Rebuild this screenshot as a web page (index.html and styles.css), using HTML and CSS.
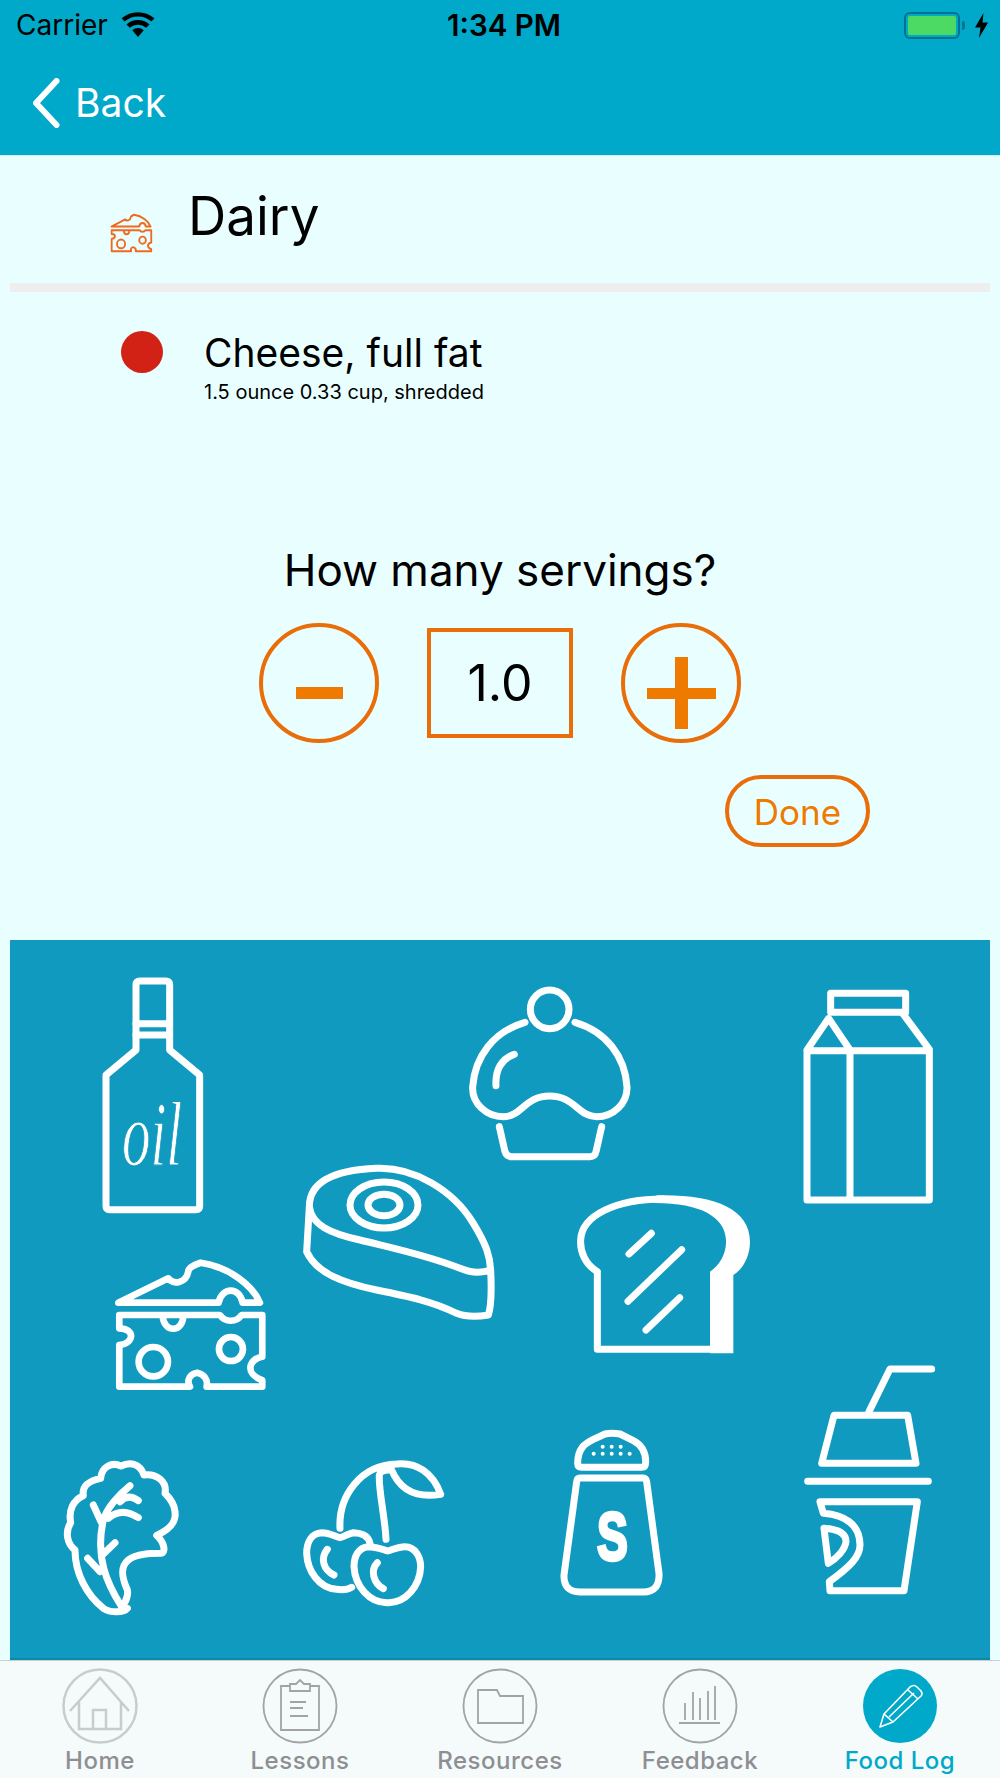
FILE: index.html
```html
<!DOCTYPE html>
<html lang="en">
<head>
<meta charset="utf-8">
<title>Dairy</title>
<link rel="stylesheet" href="styles.css">
</head>
<body>
<svg class="defs" width="0" height="0" aria-hidden="true">
  <symbol id="cheese" viewBox="160 920 466 408" preserveAspectRatio="none">
    <g class="line">
      <path d="M175 1058L325 985C340 1005 378 1000 385 965C385 955 400 945 422 938C510 950 580 1010 600 1058H548C540 1010 485 1010 476 1058Z"/>
      <path d="M178 1095H480C495 1118 530 1118 545 1095H607V1220C570 1225 550 1270 607 1290V1310H440C445 1290 432 1272 412 1268C392 1270 378 1290 390 1310H178V1185C225 1180 225 1135 178 1135ZM308 1095C310 1150 370 1150 370 1095"/>
      <circle cx="280" cy="1235" r="44"/>
      <circle cx="513" cy="1197" r="36"/>
    </g>
  </symbol>
</svg>
<div class="app">
  <header class="top">
    <div class="status">
      <div class="carrier">
        <span>Carrier</span>
        <svg class="wifi" viewBox="0 0 34 26">
          <path d="M17 26L11 19A9 9 0 0 1 23 19Z"/>
          <path d="M8.500 16.500A13 13 0 0 1 25.500 16.500L29 13A18 18 0 0 0 5 13Z"/>
          <path d="M3 10A21 21 0 0 1 31 10L34 6.500A26 26 0 0 0 0 6.500Z"/>
        </svg>
      </div>
      <span class="clock">1:34 PM</span>
      <div class="power">
        <span class="battery"><span class="charge"></span></span>
        <span class="nub"></span>
        <svg class="bolt" viewBox="0 0 13 25"><path d="M8.500 0L0 14.500H5.500L4 25L13 9.500H7.500Z"/></svg>
      </div>
    </div>
    <div class="nav">
      <svg class="chevron" viewBox="0 0 28 50"><path d="M24.500 3L4 25L24.500 47"/></svg>
      <span class="back">Back</span>
    </div>
  </header>

  <section class="category">
    <svg class="cat-icon"><use href="#cheese"/></svg>
    <h1 class="cat-title">Dairy</h1>
  </section>
  <div class="rule"></div>

  <section class="food">
    <span class="dot"></span>
    <div class="food-text">
      <div class="food-name">Cheese, full fat</div>
      <div class="food-size">1.5 ounce 0.33 cup, shredded</div>
    </div>
  </section>

  <h2 class="prompt">How many servings?</h2>
  <div class="stepper">
    <div class="round"><span class="minus"></span></div>
    <div class="qty">1.0</div>
    <div class="round"><span class="plus"></span></div>
  </div>
  <div class="done-row"><div class="done">Done</div></div>

  <section class="panel">
    <svg class="foods" viewBox="10 940 980 718">
      <!-- bottle, meat -->
      <g class="line" transform="translate(60 950) scale(.33333)">
        <path d="M228 300V105Q228 93 240 93H317Q329 93 329 105V300L419 375V768Q419 779 408 779H149Q138 779 138 768V375Z"/>
        <path d="M228 221H329M228 255H329"/>
        <path d="M748 770C748 690 830 660 950 655C1060 650 1180 720 1240 820C1280 885 1290 920 1292 960C1270 968 1235 970 1200 955C1100 915 1000 895 900 870C810 850 755 825 748 770L740 905C770 970 850 1000 950 1020C1050 1040 1120 1055 1190 1090C1220 1102 1255 1100 1285 1095C1297 1060 1294 1000 1292 960"/>
        <ellipse cx="972" cy="765" rx="102" ry="69"/>
        <ellipse cx="972" cy="765" rx="48" ry="32"/>
      </g>
      <text class="oil" transform="translate(122 1165) scale(.62 1)">oil</text>
      <!-- cheese -->
      <use href="#cheese" x="113.300" y="1256.700" width="155.300" height="136"/>
      <!-- cupcake, bread, milk -->
      <g class="line" transform="translate(450 960) scale(.33333)">
        <circle cx="299" cy="148" r="58"/>
        <path d="M225 187C130 215 75 290 68 380C65 430 110 470 160 470C215 470 225 408 299 408C373 408 385 470 440 470C490 470 533 430 531 380C525 290 470 215 375 187"/>
        <path d="M193 283C155 295 135 330 138 377"/>
        <path d="M148 500L165 575Q170 590 185 590H420Q435 590 438 575L455 500"/>
        <rect x="1142" y="100" width="225" height="57"/>
        <path d="M1071 272H1438V720H1071ZM1200 272V720M1071 270L1136 175L1200 270M1358 160L1438 268"/>
        <path d="M442 935C405 912 390 875 392 840C395 765 500 717 640 717M442 935V1168H790"/>
        <path class="solid" d="M620 706C790 702 900 745 900 845C900 885 882 925 850 945V1180H780V935C810 915 830 880 828 840C825 770 750 728 610 729Z"/>
        <path d="M537 882L604 820M534 1024L695 869M588 1110L689 1013"/>
      </g>
      <!-- lettuce, cherries -->
      <g class="line" transform="translate(40 1350) scale(.33333)">
        <path d="M245 770C265 750 265 720 260 715C245 680 240 650 265 630C290 610 335 610 362 610C378 608 375 580 350 556C385 540 410 520 405 485C403 460 385 440 375 430C382 395 350 370 312 375C300 340 270 335 243 348C215 335 185 350 182 385C150 392 125 405 130 437C100 450 85 480 92 518C75 545 80 580 105 600C105 670 140 735 190 775C210 788 250 790 262 775"/>
        <path d="M245 770C200 700 165 620 190 510C200 475 235 435 270 407M160 465L183 515M240 455Q265 430 295 452M205 505Q245 470 295 503M190 612L225 578M143 625L180 665"/>
        <path d="M990 580C985 555 960 548 940 548C925 550 915 560 900 563C885 560 870 548 845 548C815 550 800 575 800 610C802 660 835 715 890 718C905 720 925 718 935 712"/>
        <path d="M1043 603C1025 598 1010 590 985 590C955 592 942 620 942 650C945 710 990 760 1043 758C1095 760 1140 710 1142 650C1142 620 1125 590 1095 590C1075 590 1060 598 1043 603Z"/>
        <path d="M862 598C840 625 850 660 882 675M1012 638C990 660 1000 700 1030 716"/>
        <path d="M900 535C895 440 960 345 1070 342C1130 335 1180 370 1202 433C1130 445 1080 420 1055 360M1038 568C1035 500 1015 420 1018 375Q1020 362 1045 360"/>
      </g>
      <!-- salt, yogurt -->
      <g class="line" transform="translate(530 1350) scale(.33333)">
        <path d="M155 352Q143 352 143 340C143 295 165 280 190 268L225 252Q245 248 270 252L310 272C335 285 347 305 347 335Q347 352 335 352Z"/>
        <path d="M150 384H340Q348 384 350 395L387 670Q390 725 340 726H150Q100 725 102 675L140 395Q141 384 150 384Z"/>
        <path d="M912 196H1133L1158 340H875ZM1017 185L1080 57H1205M833 394H1195"/>
        <path d="M870 455H1162L1122 722H900L898 695C960 650 990 620 990 585C990 520 940 495 880 490Z"/>
        <path d="M882 535C930 538 948 555 948 575C945 600 920 625 895 640Z"/>
      </g>
      <g class="dots" transform="translate(530 1350) scale(.33333)">
        <circle cx="218" cy="290" r="6"/><circle cx="245" cy="290" r="6"/><circle cx="272" cy="290" r="6"/>
        <circle cx="191" cy="311" r="6"/><circle cx="218" cy="311" r="6"/><circle cx="245" cy="311" r="6"/><circle cx="272" cy="311" r="6"/><circle cx="299" cy="311" r="6"/>
      </g>
      <text class="salt" transform="translate(597 1560) scale(.68 1)">S</text>
    </svg>
  </section>

  <nav class="tabs">
    <div class="tab">
      <svg class="tab-icon faint" viewBox="-38 -38 76 76">
        <circle r="36.500"/>
        <path d="M-30 5L0 -28L29 5M-21 -4V23H21V-4M-7 23V4H6V23"/>
      </svg>
      <span>Home</span>
    </div>
    <div class="tab">
      <svg class="tab-icon" viewBox="-38 -38 76 76">
        <circle r="36.500"/>
        <path d="M-10 -20H-19V24H19V-20H10M-10 -15H10V-22H4L0 -26L-4 -22H-10ZM-10 -4H6M-10 2H3M-10 10H8"/>
      </svg>
      <span>Lessons</span>
    </div>
    <div class="tab">
      <svg class="tab-icon" viewBox="-38 -38 76 76">
        <circle r="36.500"/>
        <path d="M-22 17V-16H-3L0 -10H23V17Z"/>
      </svg>
      <span>Resources</span>
    </div>
    <div class="tab">
      <svg class="tab-icon" viewBox="-38 -38 76 76">
        <circle r="36.500"/>
        <path d="M-15 14V-3M-7 14V-14M0 14V-8M8 14V-15M15 14V-20M-21 17H20"/>
      </svg>
      <span>Feedback</span>
    </div>
    <div class="tab active">
      <svg class="tab-icon" viewBox="-38 -38 76 76">
        <circle r="37"/>
        <path d="M-20 21L-16 8L10 -19Q14 -22 17 -19L21 -15Q23 -12 21 -10L-7 16ZM-16 8L-7 16M-11 11L14 -13M8 -16L18 -7"/>
      </svg>
      <span>Food Log</span>
    </div>
  </nav>
</div>
</body>
</html>
```
FILE: styles.css
```css
* { box-sizing: border-box; }
html, body { margin: 0; padding: 0; }
body { font-family: Inter, "Liberation Sans", sans-serif; color: #000; }
.defs { position: absolute; }

.app { width: 1000px; height: 1778px; display: flex; flex-direction: column; background: #e9ffff; overflow: hidden; }

.top { height: 156px; background: #00a9c9; border-bottom: 1px solid #cfeef2; }
.status { height: 50px; padding: 0 12px 0 16px; display: flex; justify-content: space-between; align-items: center; position: relative; font-size: 28px; }
.carrier { display: flex; align-items: center; gap: 13px; }
.wifi { width: 34px; height: 25px; margin-top: -2px; fill: #000; }
.clock { position: absolute; left: 447px; font-weight: 600; font-size: 29.500px; }
.power { display: flex; align-items: center; }
.battery { width: 56px; height: 27px; padding: 2px; border: 2px solid #00738c; border-radius: 6px; display: block; }
.charge { display: block; width: 100%; height: 100%; background: #4cd964; border-radius: 2px; }
.nub { width: 3px; height: 9px; margin-left: 2px; background: #00738c; border-radius: 0 3px 3px 0; }
.bolt { width: 13px; height: 25px; margin-left: 10px; fill: #000; }

.nav { height: 105px; padding: 0 0 0 32px; display: flex; align-items: center; gap: 15px; color: #fff; }
.chevron { width: 28px; height: 50px; fill: none; stroke: #fff; stroke-width: 6; stroke-linecap: round; stroke-linejoin: round; }
.back { font-size: 39px; }

.category { height: 127px; padding: 0 0 0 110px; display: flex; align-items: flex-start; }
.cat-icon { width: 43px; height: 40px; margin-top: 57px; color: #f0691f; flex: none; }
.cat-title { margin: 27px 0 0 35px; font-size: 53px; font-weight: 400; line-height: 66px; }

.rule { height: 9px; margin: 0 10px; background: #eeeeee; }

.food { display: flex; padding: 39px 0 0 121px; height: 250px; gap: 41px; }
.dot { width: 42px; height: 42px; border-radius: 50%; background: #d22215; flex: none; }
.food-name { font-size: 39px; line-height: 46px; margin-top: -1px; }
.food-size { font-size: 20px; line-height: 24px; margin-top: 4px; }

.prompt { margin: 0; text-align: center; font-size: 44px; font-weight: 400; line-height: 56px; height: 81px; }
.stepper { display: flex; justify-content: center; align-items: center; gap: 48px; height: 120px; }
.round { width: 120px; height: 120px; border: 4px solid #e96d08; border-radius: 50%; display: flex; align-items: center; justify-content: center; }
.minus { width: 47px; height: 12px; background: #ee7a00; margin-top: 20px; }
.plus { width: 69px; height: 11px; background: #ee7a00; position: relative; margin-top: 20px; }
.plus::after { content: ""; position: absolute; left: 28px; top: -31px; width: 13px; height: 72px; background: #ee7a00; }
.qty { width: 146px; height: 110px; border: 4px solid #e96d08; display: flex; align-items: center; justify-content: center; font-size: 50px; }
.done-row { display: flex; justify-content: flex-end; padding: 32px 130px 0 0; height: 197px; }
.done { width: 145px; height: 72px; padding-top: 2px; border: 4px solid #e96d08; border-radius: 36px; color: #ee7a00; font-size: 35px; display: flex; align-items: center; justify-content: center; }

.panel { margin: 0 10px; height: 720px; background: #109abf; border-bottom: 2px solid #0a8aa6; flex: none; }
.foods { display: block; width: 980px; height: 718px; }
.line { fill: none; stroke: #fff; stroke-width: 21; stroke-linecap: round; stroke-linejoin: round; }
.solid { fill: #fff; stroke: none; }
.dots { fill: #fff; }
.foods use { color: #fff; }
#cheese .line { stroke: currentColor; stroke-width: 20; }
.oil { font-family: "Liberation Serif", serif; font-style: italic; font-size: 92px; fill: #fff; stroke: #109abf; stroke-width: 1.200px; }
.salt { font-family: "Liberation Sans", sans-serif; font-weight: 700; font-size: 68px; fill: #fff; stroke: #fff; stroke-width: 3.500px; }

.tabs { flex: 1; display: grid; grid-template-columns: repeat(5, 200px); background: #f5fafb; border-top: 1px solid #c9d0d2; }
.tab { display: flex; flex-direction: column; align-items: center; padding-top: 7px; font-size: 24px; font-weight: 500; letter-spacing: .5px; color: #8e8e93; }
.tab span { line-height: 28px; margin-top: 3px; }
.tab-icon { width: 76px; height: 76px; fill: none; stroke: #a3a3a5; stroke-width: 1.800; display: block; }
.tab-icon.faint { stroke: #c9cccc; stroke-width: 2.500; filter: blur(.6px); }
.active { color: #00a9c9; }
.active .tab-icon circle { fill: #00a9c9; stroke: none; }
.active .tab-icon path { stroke: #fff; stroke-width: 1.600; stroke-linejoin: round; }
```
